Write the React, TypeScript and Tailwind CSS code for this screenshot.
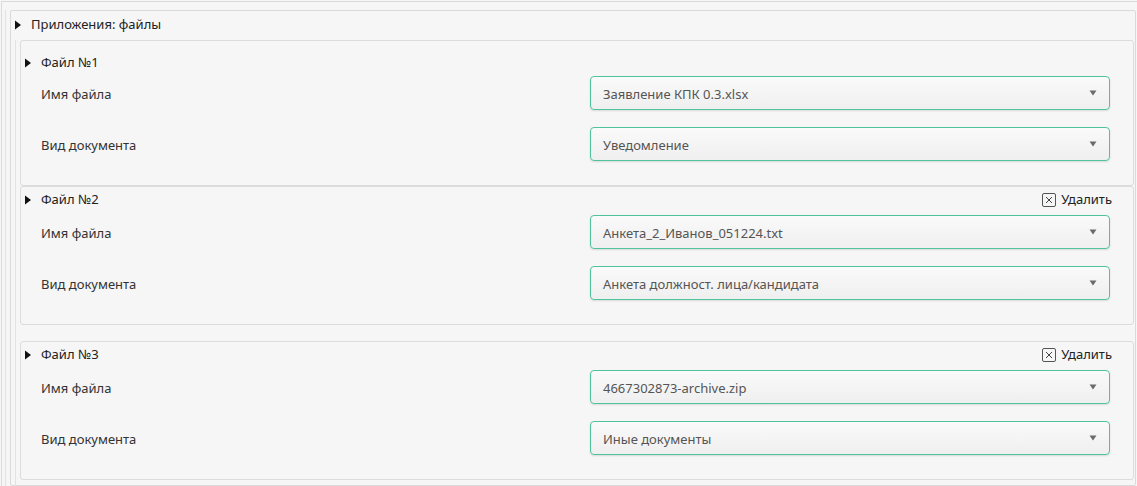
import React from 'react';

interface FileEntry {
  id: number;
  fileName: string;
  docType: string;
  removable: boolean;
}

const files: FileEntry[] = [
  { id: 1, fileName: 'Заявление КПК 0.3.xlsx', docType: 'Уведомление', removable: false },
  { id: 2, fileName: 'Анкета_2_Иванов_051224.txt', docType: 'Анкета должност. лица/кандидата', removable: true },
  { id: 3, fileName: '4667302873-archive.zip', docType: 'Иные документы', removable: true },
];

const Arrow: React.FC = () => (
  <svg width="8" height="10" viewBox="0 0 8 10" className="shrink-0">
    <path d="M1 0.5 L7 5 L1 9.5 Z" fill="#111" />
  </svg>
);

const SmallCaret: React.FC = () => (
  <svg width="8" height="6" viewBox="0 0 8 6" className="shrink-0">
    <path d="M0.5 0.5 L7.5 0.5 L4 5.5 Z" fill="#6b6b6b" />
  </svg>
);

const Select: React.FC<{ value: string }> = ({ value }) => (
  <div className="flex-1 h-[34px] flex items-center justify-between pl-[12px] pr-[12px] rounded-[4px] border border-[#4fc49b] bg-gradient-to-b from-[#fafafa] to-[#efefef] shadow-[0_1px_2px_rgba(0,0,0,0.12)] text-[13px] text-[#555]">
    <span className="pt-[3px]">{value}</span>
    <SmallCaret />
  </div>
);

const Row: React.FC<{ label: string; value: string }> = ({ label, value }) => (
  <div className="flex items-center pr-[23px]">
    <div className="w-[569px] pl-[20px] pt-[3px] text-[13px] text-[#333]">{label}</div>
    <Select value={value} />
  </div>
);

const RemoveButton: React.FC = () => (
  <div className="flex items-center gap-[5px] text-[13px] text-[#222]">
    <svg width="14" height="14" viewBox="0 0 14 14">
      <rect x="0.5" y="0.5" width="13" height="13" rx="1.5" fill="none" stroke="#555" />
      <path d="M4 4 L10 10 M10 4 L4 10" stroke="#444" strokeWidth="1" />
    </svg>
    <span>Удалить</span>
  </div>
);

const FileCard: React.FC<{ file: FileEntry; first: boolean }> = ({ file, first }) => (
  <div
    className={
      'border border-[#dcdcdc] rounded-[3px] bg-[#f6f6f6] pb-[24px] ' +
      (first ? 'pt-[11px]' : 'pt-[2px]')
    }
  >
    <div className="h-[22px] flex items-center justify-between pl-[3px] pr-[21px]">
      <div className="flex items-center gap-[9px] text-[13px] text-[#222]">
        <Arrow />
        <span>Файл №{file.id}</span>
      </div>
      {file.removable && <RemoveButton />}
    </div>
    <div className={'flex flex-col gap-[17px] ' + (first ? 'mt-[2px]' : 'mt-[4px]')}>
      <Row label="Имя файла" value={file.fileName} />
      <Row label="Вид документа" value={file.docType} />
    </div>
  </div>
);

const App: React.FC = () => {
  return (
    <div
      className="w-[1137px] h-[486px] overflow-hidden bg-[#f6f6f6] pl-[1px] pt-[1px]"
      style={{ fontFamily: '"Noto Sans", "Open Sans", sans-serif' }}
    >
      <div className="h-full border-l border-t border-[#dadada] pl-[3px] pt-[8px] pr-[1px]">
        <div className="h-full border-l border-[#e2e2e2] pl-[4px]">
          <div className="h-full border border-[#dadada] rounded-[2px] pr-[1px]">
            <div className="h-[29px] flex items-center gap-[9px] pl-[3px] pb-[2px] text-[13px] text-[#222]">
              <Arrow />
              <span>Приложения: файлы</span>
            </div>
            <div className="h-full border-l border-[#e2e2e2] ml-[4px] pl-[4px]">
              <div className="flex flex-col">
                {files.map((f, i) => (
                  <div key={f.id} className={i === 2 ? 'mt-[16px]' : ''}>
                    <FileCard file={f} first={i === 0} />
                  </div>
                ))}
              </div>
            </div>
          </div>
        </div>
      </div>
    </div>
  );
};

export default App;
